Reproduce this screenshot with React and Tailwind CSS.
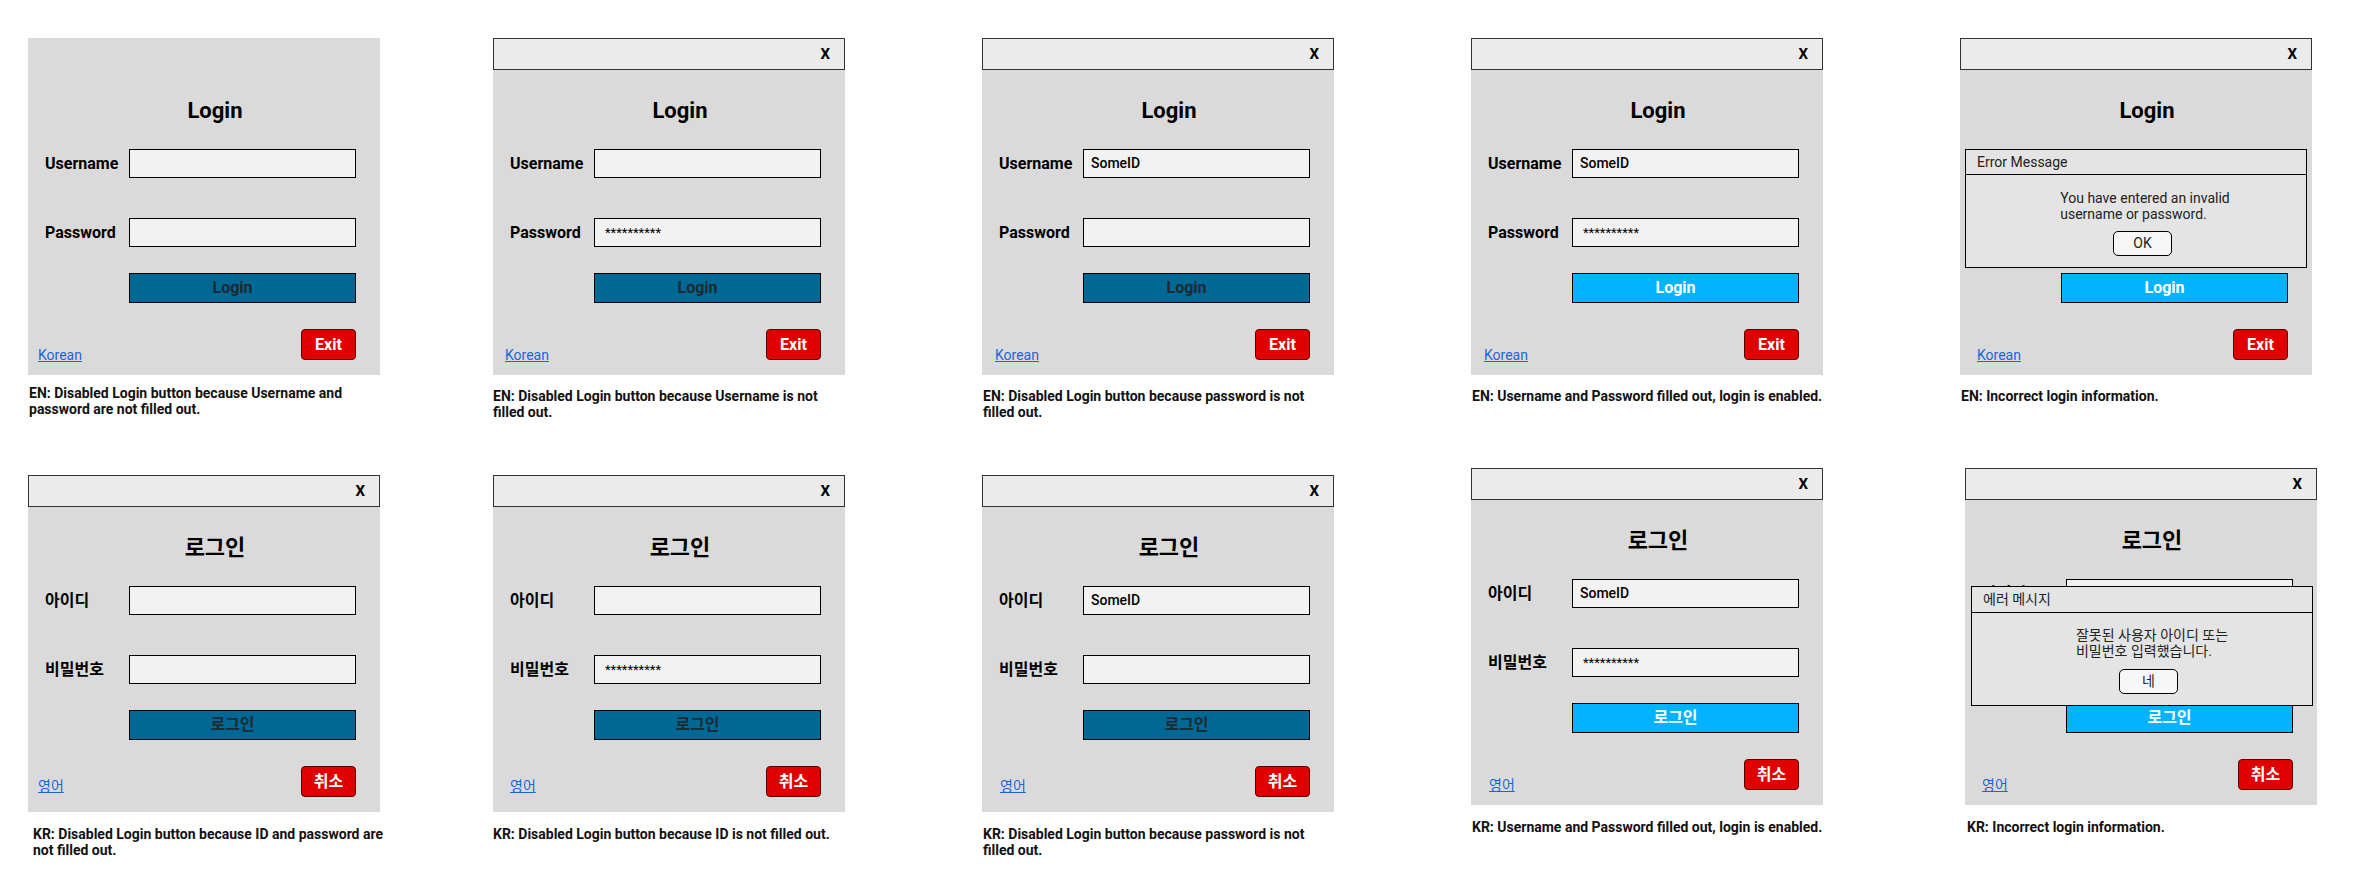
const EN = {
  title: 'Login',
  user: 'Username',
  pass: 'Password',
  btn: 'Login',
  exit: 'Exit',
  link: 'Korean',
};

const KO = {
  title: '로그인',
  user: '아이디',
  pass: '비밀번호',
  btn: '로그인',
  exit: '취소',
  link: '영어',
};

const rows = [
  [
    { ko: false, bar: false, id: false, pw: false, on: false, err: false, ml: 'ml-[28px]', mt: 'mt-0', lx: 'ml-[10px] mt-[18px]', capMt: 'mt-[10px]', capPl: 'pl-px', cap: ['EN: Disabled Login button because Username and', 'password are not filled out.'] },
    { ko: false, bar: true, id: false, pw: true, on: false, err: false, ml: 'ml-[113px]', mt: 'mt-0', lx: 'ml-[12px] mt-[18px]', capMt: 'mt-[13px]', capPl: 'pl-0', cap: ['EN: Disabled Login button because Username is not', 'filled out.'] },
    { ko: false, bar: true, id: true, pw: false, on: false, err: false, ml: 'ml-[137px]', mt: 'mt-0', lx: 'ml-[13px] mt-[18px]', capMt: 'mt-[13px]', capPl: 'pl-px', cap: ['EN: Disabled Login button because password is not', 'filled out.'] },
    { ko: false, bar: true, id: true, pw: true, on: true, err: false, ml: 'ml-[137px]', mt: 'mt-0', lx: 'ml-[13px] mt-[18px]', capMt: 'mt-[13px]', capPl: 'pl-px', cap: ['EN: Username and Password filled out, login is enabled.'] },
    { ko: false, bar: true, id: true, pw: true, on: true, err: true, ml: 'ml-[137px]', mt: 'mt-0', lx: 'ml-[17px] mt-[18px]', capMt: 'mt-[13px]', capPl: 'pl-px', cap: ['EN: Incorrect login information.'] },
  ],
  [
    { ko: true, bar: true, id: false, pw: false, on: false, err: false, ml: 'ml-[28px]', mt: 'mt-[7px]', lx: 'ml-[10px] mt-[12px]', capMt: 'mt-[14px]', capPl: 'pl-[5px]', cap: ['KR: Disabled Login button because ID and password are', 'not filled out.'] },
    { ko: true, bar: true, id: false, pw: true, on: false, err: false, ml: 'ml-[113px]', mt: 'mt-[7px]', lx: 'ml-[17px] mt-[12px]', capMt: 'mt-[14px]', capPl: 'pl-0', cap: ['KR: Disabled Login button because ID is not filled out.'] },
    { ko: true, bar: true, id: true, pw: false, on: false, err: false, ml: 'ml-[137px]', mt: 'mt-[7px]', lx: 'ml-[18px] mt-[12px]', capMt: 'mt-[14px]', capPl: 'pl-px', cap: ['KR: Disabled Login button because password is not', 'filled out.'] },
    { ko: true, bar: true, id: true, pw: true, on: true, err: false, ml: 'ml-[137px]', mt: 'mt-0', lx: 'ml-[18px] mt-[18px]', capMt: 'mt-[14px]', capPl: 'pl-px', cap: ['KR: Username and Password filled out, login is enabled.'] },
    { ko: true, bar: true, id: true, pw: true, on: true, err: true, ml: 'ml-[142px]', mt: 'mt-0', lx: 'ml-[17px] mt-[18px]', capMt: 'mt-[14px]', capPl: 'pl-[2px]', cap: ['KR: Incorrect login information.'] },
  ],
];

const ErrorBox = ({ ko }) => {
  if (ko) {
    return (
      <div className="absolute left-[6px] top-[118px] w-[342px] h-[120px] border border-black bg-[#e4e4e4] flex flex-col">
        <div className="h-[26px] border-b border-black flex items-center pl-[11px] text-[14px] text-[#222]">에러 메시지</div>
        <div className="flex flex-col items-center pt-[14px]">
          <div className="ml-[20px] text-left text-[14px] leading-[16px] text-[#222]">
            잘못된 사용자 아이디 또는<br />비밀번호 입력했습니다.
          </div>
          <div className="mt-[10px] ml-[13px] w-[59px] h-[25px] rounded-[5px] border border-black bg-[#f7f7f7] flex items-center justify-center text-[14px] text-[#222]">네</div>
        </div>
      </div>
    );
  }
  return (
    <div className="absolute left-[5px] top-[111px] w-[342px] h-[119px] border border-black bg-[#e4e4e4] flex flex-col">
      <div className="h-[25px] border-b border-black flex items-center pl-[11px] text-[14px] text-[#222]">Error Message</div>
      <div className="flex flex-col items-center pt-[15px]">
        <div className="ml-[18px] text-left text-[14px] leading-[16px] text-[#222]">
          You have entered an invalid<br />username or password.
        </div>
        <div className="mt-[9px] ml-[13px] w-[59px] h-[25px] rounded-[5px] border border-black bg-[#f7f7f7] flex items-center justify-center text-[14px] text-[#222]">OK</div>
      </div>
    </div>
  );
};

const Panel = ({ c }) => {
  const t = c.ko ? KO : EN;

  return (
    <div className={`w-[352px] shrink-0 ${c.ml} ${c.mt}`}>
      <div className="relative h-[337px] bg-[#dadada] flex flex-col">
        {c.bar ? (
          <div className="h-[32px] border border-[#333] bg-[#ebebeb] flex items-center justify-end pr-[14px]">
            <span className="text-[15px] font-bold leading-none">X</span>
          </div>
        ) : (
          <div className="h-[32px]" />
        )}

        <div className="mt-[26px] h-[28px] pl-[22px] flex items-center justify-center text-[22px] font-bold">{t.title}</div>

        <div className="mt-[25px] h-[29px] flex items-center">
          <div className="w-[101px] pl-[17px] text-[16px] font-bold">{t.user}</div>
          <div className="w-[227px] h-[29px] border border-black bg-[#f2f2f2] flex items-center pl-[7px] text-[14px] font-medium">
            {c.id && 'SomeID'}
          </div>
        </div>

        <div className="mt-[40px] h-[29px] flex items-center">
          <div className="w-[101px] pl-[17px] text-[16px] font-bold">{t.pass}</div>
          <div className="w-[227px] h-[29px] border border-black bg-[#f2f2f2] flex items-center pl-[10px] text-[13px] leading-none">
            {c.pw && '**********'}
          </div>
        </div>

        <div className="mt-[26px] flex">
          <div
            className={`ml-[101px] w-[227px] h-[30px] border border-black flex items-center justify-center pr-[20px] text-[16px] font-bold ${
              c.on ? 'bg-[#03b3fd] text-white' : 'bg-[#006895] text-[#1d2a31]'
            }`}
          >
            {t.btn}
          </div>
        </div>

        <div className="mt-[26px] h-[31px] flex justify-between items-start pr-[24px]">
          <a href="#" className={`${c.lx} text-[14px] leading-[16px] text-[#1d64d8] underline`}>
            {t.link}
          </a>
          <div className="w-[55px] h-[31px] rounded-[4px] border border-[#5a0000] bg-[#e00000] flex items-center justify-center text-[16px] font-bold text-white">
            {t.exit}
          </div>
        </div>

        {c.err && <ErrorBox ko={c.ko} />}
      </div>

      <p className={`${c.capMt} ${c.capPl} text-[14px] leading-[16px] font-bold text-[#111] whitespace-nowrap`}>
        {c.cap.map((line, i) => (
          <span key={i} className="block">{line}</span>
        ))}
      </p>
    </div>
  );
};

export default function App() {
  return (
    <div className="w-[2368px] h-[885px] bg-white pt-[38px] font-['Roboto','Noto_Sans_CJK_KR',sans-serif] text-black overflow-hidden">
      <div className="h-[430px] flex items-start">
        {rows[0].map((c, i) => (
          <Panel key={i} c={c} />
        ))}
      </div>
      <div className="flex items-start">
        {rows[1].map((c, i) => (
          <Panel key={i} c={c} />
        ))}
      </div>
    </div>
  );
}
